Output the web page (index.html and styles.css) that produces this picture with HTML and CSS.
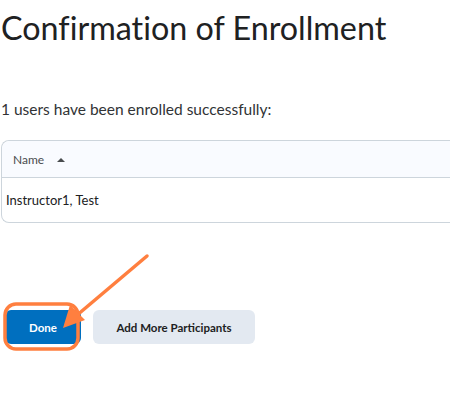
FILE: index.html
```html
<!DOCTYPE html>
<html lang="en">
<head>
    <meta charset="UTF-8">
    <title>Confirmation of Enrollment</title>
    <link rel="stylesheet" href="styles.css">
</head>
<body>
    <main class="page">
        <h1>Confirmation of Enrollment</h1>
        <p class="summary">1 users have been enrolled successfully:</p>
        <table class="users-table">
            <thead>
                <tr>
                    <th>Name <span class="sort-arrow"></span></th>
                </tr>
            </thead>
            <tbody>
                <tr>
                    <td>Instructor1, Test</td>
                </tr>
            </tbody>
        </table>
        <div class="actions">
            <button class="btn btn-primary">Done</button>
            <button class="btn btn-secondary">Add More Participants</button>
        </div>
    </main>
    <!-- annotation drawn over the screenshot -->
    <svg class="annotation" width="450" height="405" viewBox="0 0 450 405">
        <rect x="5" y="304" width="73" height="45" rx="11" fill="none" stroke="#ff7f3f" stroke-width="3.5"/>
        <line x1="147" y1="256" x2="76" y2="316" stroke="#ff7f3f" stroke-width="3.5" stroke-linecap="round"/>
        <polygon points="63,328 70,305 85,320" fill="#ff7f3f"/>
    </svg>
</body>
</html>
```

FILE: styles.css
```css
* {
    margin: 0;
    padding: 0;
    box-sizing: border-box;
}

body {
    font-family: Lato, "Noto Sans", sans-serif;
    font-variant-ligatures: none;
    color: #202122;
    background-color: #fff;
    overflow: hidden;
}

.page {
    padding: 8px 0 0 1px;
}

h1 {
    font-size: 32.3px;
    font-weight: 400;
    line-height: 40px;
    color: #202122;
}

.summary {
    margin-top: 51px;
    font-size: 15.5px;
    line-height: 20px;
    color: #313335;
}

.users-table {
    margin-top: 21px;
    width: 470px;
    border-collapse: separate;
    border-spacing: 0;
    border: 1px solid #cdd5dc;
    border-right: none;
    border-radius: 8px 0 0 8px;
}

.users-table th {
    background-color: #f9fbff;
    height: 37px;
    padding: 0 0 0 11px;
    text-align: left;
    font-size: 12px;
    font-weight: 400;
    color: #494c4e;
    border-bottom: 1px solid #cdd5dc;
    border-radius: 8px 0 0 0;
}

.sort-arrow {
    display: inline-block;
    width: 0;
    height: 0;
    margin-left: 10px;
    vertical-align: 2px;
    border-left: 4px solid transparent;
    border-right: 4px solid transparent;
    border-bottom: 4px solid #494c4e;
}

.users-table td {
    height: 44px;
    padding: 0 0 0 4px;
    font-size: 13px;
    color: #202122;
}

.actions {
    display: flex;
    gap: 12px;
    margin-top: 87px;
    padding-left: 4px;
}

.btn {
    height: 34px;
    border: none;
    border-radius: 6px;
    font-family: Lato, "Noto Sans", sans-serif;
    font-size: 11.5px;
    font-weight: 700;
    cursor: pointer;
}

.btn-primary {
    width: 76px;
    background-color: #006fbf;
    color: #fff;
}

.btn-secondary {
    width: 162px;
    background-color: #e3e9f1;
    color: #202122;
}

.annotation {
    position: absolute;
    top: 0;
    left: 0;
    pointer-events: none;
}
```
